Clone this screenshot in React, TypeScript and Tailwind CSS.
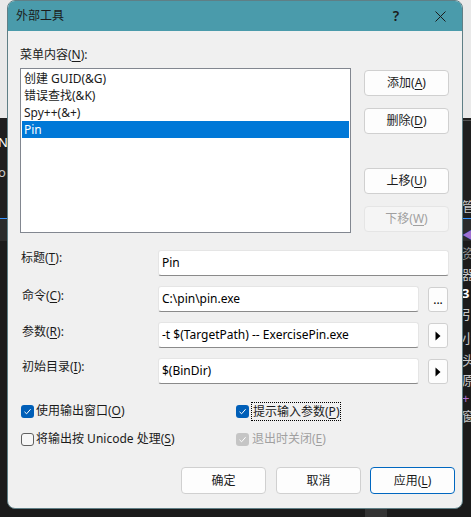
import React from "react";

function U({ children }: { children: React.ReactNode }) {
  return <span className="underline underline-offset-[2px] decoration-[1px]">{children}</span>;
}

function Btn({
  children,
  disabled,
  primary,
  className = "",
}: {
  children: React.ReactNode;
  disabled?: boolean;
  primary?: boolean;
  className?: string;
}) {
  const base = disabled
    ? "bg-[#f5f5f5] border-[#e5e5e5] text-[#a0a0a0]"
    : primary
    ? "bg-[#fdfdfd] border-[#0067c0] text-[#1b1b1b]"
    : "bg-[#fdfdfd] border-[#d0d0d0] text-[#1b1b1b]";
  return (
    <div className={`flex items-center justify-center border rounded-[4px] text-[12px] ${base} ${className}`}>
      {children}
    </div>
  );
}

function Check({ state }: { state: "on" | "off" | "disabled" }) {
  if (state === "off") {
    return <div className="w-[13px] h-[13px] rounded-[3px] border border-[#616161] bg-[#f7f7f7]" />;
  }
  const bg = state === "on" ? "bg-[#005fb8]" : "bg-[#c5c5c5]";
  return (
    <div className={`w-[13px] h-[13px] rounded-[3px] flex items-center justify-center ${bg}`}>
      <svg width="9" height="9" viewBox="0 0 9 9">
        <path d="M1.5 4.8 L3.6 6.8 L7.6 2.2" fill="none" stroke="white" strokeWidth="1" />
      </svg>
    </div>
  );
}

function Field({ value, className = "" }: { value: string; className?: string }) {
  return (
    <div
      className={`h-[26px] bg-white border border-[#e5e5e5] border-b-[#8a8a8a] rounded-[3px] flex items-center pl-[3px] text-[12px] text-black ${className}`}
    >
      {value}
    </div>
  );
}

function SmallBtn({ children }: { children: React.ReactNode }) {
  return (
    <div className="ml-[9px] mt-[1px] w-[20px] h-[25px] bg-[#fdfdfd] border border-[#d0d0d0] rounded-[3px] flex items-center justify-center text-[12px] text-black">
      {children}
    </div>
  );
}

function Tri() {
  return (
    <svg width="6" height="10" viewBox="0 0 6 10">
      <path d="M0.5 0.5 L5.5 5 L0.5 9.5 Z" fill="#000" />
    </svg>
  );
}

export default function App() {
  const sideGlyphs: { t: string; y: number; c: string }[] = [
    { t: "管", y: 198, c: "text-[#c8c8c8]" },
    { t: "◀", y: 226, c: "text-[#a070d0]" },
    { t: "资", y: 245, c: "text-[#909090]" },
    { t: "器", y: 266, c: "text-[#c8c8c8]" },
    { t: "3", y: 285, c: "text-[#ffffff] font-bold" },
    { t: "引", y: 306, c: "text-[#c8c8c8]" },
    { t: "小", y: 330, c: "text-[#c8c8c8]" },
    { t: "头", y: 352, c: "text-[#c8c8c8]" },
    { t: "原", y: 372, c: "text-[#c8c8c8]" },
    { t: "+", y: 390, c: "text-[#b070d0]" },
    { t: "窗", y: 408, c: "text-[#c8c8c8]" },
  ];
  return (
    <div className="relative w-[471px] h-[517px] overflow-hidden bg-[#1b1b1b] font-['Noto_Sans','Noto_Sans_CJK_SC',sans-serif] text-[12px] text-[#1b1b1b]">
      {/* background IDE behind dialog */}
      <div className="h-[118px] bg-[#e9e9e9]" />
      <div className="h-[100px] bg-[#1f1f1f]" />
      <div className="h-[1px] bg-[#3794ff]" />
      <div className="h-[22px] bg-[#2b2b2b]" />
      <div className="absolute left-[-2px] top-[133px] text-[13px] text-white">N</div>
      <div className="absolute left-[-2px] top-[163px] text-[13px] text-[#cccccc]">o</div>
      <div className="absolute left-[463px] top-[120px] w-[8px] h-[1px] bg-[#555]" />
      {sideGlyphs.map((g, i) => (
        <div key={i} className={`absolute left-[462px] text-[13px] leading-[16px] ${g.c}`} style={{ top: g.y }}>
          {g.t}
        </div>
      ))}
      <div className="absolute left-[365px] top-[509px] w-[22px] h-[8px] bg-[#333]" />

      {/* dialog */}
      <div className="absolute left-[7px] top-0 w-[456px] h-[509px] rounded-[8px] border border-[#5f7f86] bg-[#f0f0f0] flex flex-col overflow-hidden">
        <div className="h-[30px] bg-[#4a9bab] flex items-center text-[12px] text-[#1b1b1b]">
          <div className="pl-[8px] -mt-[1px]">外部工具</div>
          <div className="ml-auto w-[46px] flex justify-center text-[14px] font-semibold -mt-[1px]">?</div>
          <div className="w-[43px] flex justify-center">
            <svg width="11" height="11" viewBox="0 0 11 11">
              <path d="M0.5 0.5 L10.5 10.5 M10.5 0.5 L0.5 10.5" stroke="#1b1b1b" strokeWidth="1" />
            </svg>
          </div>
        </div>

        <div className="flex-1 pl-[12px] pr-[13px] pt-[16px] flex flex-col">
          {/* top section */}
          <div className="flex">
            <div className="w-[331px] flex flex-col">
              <div className="h-[16px] leading-[16px]">
                菜单内容(<U>N</U>):
              </div>
              <div className="mt-[5px] h-[165px] bg-white border border-[#828790] p-[1px] flex flex-col">
                <div className="h-[17px] leading-[17px] pl-[2px]">创建 GUID(&amp;G)</div>
                <div className="h-[17px] leading-[17px] pl-[2px]">错误查找(&amp;K)</div>
                <div className="h-[17px] leading-[17px] pl-[2px]">Spy++(&amp;+)</div>
                <div className="h-[17px] leading-[17px] pl-[2px] bg-[#0078d7] text-white">Pin</div>
              </div>
            </div>
            <div className="ml-auto w-[85px] pt-[23px] flex flex-col">
              <Btn className="h-[26px]">
                添加(<U>A</U>)
              </Btn>
              <Btn className="h-[26px] mt-[12px]">
                删除(<U>D</U>)
              </Btn>
              <Btn className="h-[26px] mt-[34px]">
                上移(<U>U</U>)
              </Btn>
              <Btn className="h-[26px] mt-[12px]" disabled>
                下移(<U>W</U>)
              </Btn>
            </div>
          </div>

          {/* form */}
          <div className="mt-[17px] flex flex-col gap-[10px]">
            <div className="flex items-start h-[26px]">
              <div className="w-[138px] h-[16px] leading-[16px] pl-[1px]">
                标题(<U>T</U>):
              </div>
              <Field value="Pin" className="flex-1" />
            </div>
            <div className="flex items-start h-[26px]">
              <div className="w-[138px] h-[16px] leading-[16px] pl-[2px] mt-[2px]">
                命令(<U>C</U>):
              </div>
              <Field value="C:\pin\pin.exe" className="w-[261px]" />
              <SmallBtn>...</SmallBtn>
            </div>
            <div className="flex items-start h-[26px]">
              <div className="w-[138px] h-[16px] leading-[16px] pl-[2px] mt-[2px]">
                参数(<U>R</U>):
              </div>
              <Field value="-t $(TargetPath) -- ExercisePin.exe" className="w-[261px]" />
              <SmallBtn>
                <Tri />
              </SmallBtn>
            </div>
            <div className="flex items-start h-[26px]">
              <div className="w-[138px] h-[16px] leading-[16px] pl-[2px] mt-[1px]">
                初始目录(<U>I</U>):
              </div>
              <Field value="$(BinDir)" className="w-[261px]" />
              <SmallBtn>
                <Tri />
              </SmallBtn>
            </div>
          </div>

          {/* checkboxes */}
          <div className="mt-[17px] grid grid-cols-[216px_1fr] gap-y-[8px]">
            <div className="h-[20px] flex items-center pl-[1px]">
              <Check state="on" />
              <span className="ml-[2px]">
                使用输出窗口(<U>O</U>)
              </span>
            </div>
            <div className="h-[20px] flex items-center">
              <Check state="on" />
              <span className="ml-[2px] border border-dotted border-black px-[1px] leading-[17px]">
                提示输入参数(<U>P</U>)
              </span>
            </div>
            <div className="h-[20px] flex items-center pl-[1px]">
              <Check state="off" />
              <span className="ml-[2px]">
                将输出按 Unicode 处理(<U>S</U>)
              </span>
            </div>
            <div className="h-[20px] flex items-center text-[#a0a0a0]">
              <Check state="disabled" />
              <span className="ml-[3px]">
                退出时关闭(<U>E</U>)
              </span>
            </div>
          </div>

          {/* bottom buttons */}
          <div className="mt-[18px] flex justify-end -mr-[6px]">
            <Btn className="w-[85px] h-[27px] mr-[10px]">确定</Btn>
            <Btn className="w-[85px] h-[27px] mr-[9px]">取消</Btn>
            <Btn className="w-[85px] h-[27px]" primary>
              应用(<U>L</U>)
            </Btn>
          </div>
        </div>
      </div>
    </div>
  );
}
